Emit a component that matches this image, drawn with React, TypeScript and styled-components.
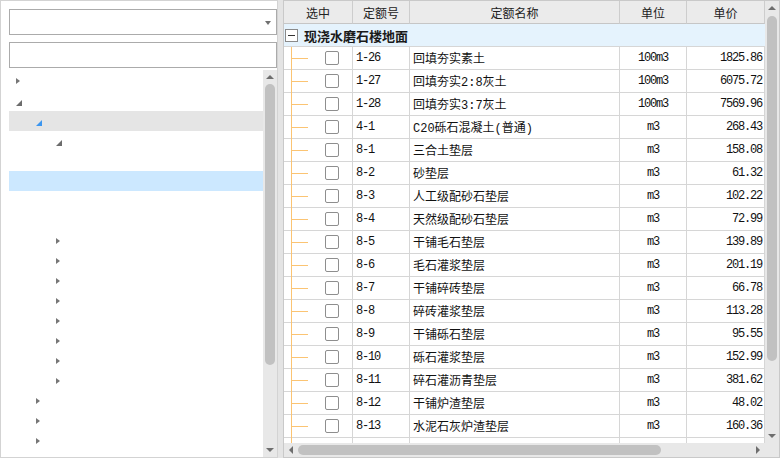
import React from "react";
import styled, { createGlobalStyle } from "styled-components";

const GlobalStyle = createGlobalStyle`
  html, body {
    margin: 0;
    padding: 0;
    background: #fff;
  }
  body {
    font-family: "Noto Sans CJK SC", sans-serif;
    font-size: 12px;
    color: #222;
  }
`;

const COLS = "69px 57px 210px 67px 78px";

type Quota = { code: string; name: string; unit: string; price: string };

const quotas: Quota[] = [
  { code: "1-26", name: "回填夯实素土", unit: "100m3", price: "1825.86" },
  { code: "1-27", name: "回填夯实2:8灰土", unit: "100m3", price: "6075.72" },
  { code: "1-28", name: "回填夯实3:7灰土", unit: "100m3", price: "7569.96" },
  { code: "4-1", name: "C20砾石混凝土(普通)", unit: "m3", price: "268.43" },
  { code: "8-1", name: "三合土垫层", unit: "m3", price: "158.08" },
  { code: "8-2", name: "砂垫层", unit: "m3", price: "61.32" },
  { code: "8-3", name: "人工级配砂石垫层", unit: "m3", price: "102.22" },
  { code: "8-4", name: "天然级配砂石垫层", unit: "m3", price: "72.99" },
  { code: "8-5", name: "干铺毛石垫层", unit: "m3", price: "139.89" },
  { code: "8-6", name: "毛石灌浆垫层", unit: "m3", price: "201.19" },
  { code: "8-7", name: "干铺碎砖垫层", unit: "m3", price: "66.78" },
  { code: "8-8", name: "碎砖灌浆垫层", unit: "m3", price: "113.28" },
  { code: "8-9", name: "干铺砾石垫层", unit: "m3", price: "95.55" },
  { code: "8-10", name: "砾石灌浆垫层", unit: "m3", price: "152.99" },
  { code: "8-11", name: "碎石灌沥青垫层", unit: "m3", price: "381.62" },
  { code: "8-12", name: "干铺炉渣垫层", unit: "m3", price: "48.02" },
  { code: "8-13", name: "水泥石灰炉渣垫层", unit: "m3", price: "160.36" },
];

type Node = { level: number; kind: "open" | "closed" | "leaf"; state?: "hover" | "selected" };

const nodes: Node[] = [
  { level: 0, kind: "closed" },
  { level: 0, kind: "open" },
  { level: 1, kind: "open", state: "hover" },
  { level: 2, kind: "open" },
  { level: 3, kind: "leaf" },
  { level: 3, kind: "leaf", state: "selected" },
  { level: 3, kind: "leaf" },
  { level: 3, kind: "leaf" },
  ...Array.from({ length: 8 }, () => ({ level: 2, kind: "closed" as const })),
  ...Array.from({ length: 3 }, () => ({ level: 1, kind: "closed" as const })),
];

const Page = styled.div`
  display: flex;
  gap: 5px;
  width: 780px;
  height: 458px;
  background: #e4e4e4;
`;

/* ---------- left side ---------- */

const LeftPanel = styled.div`
  box-sizing: border-box;
  width: 278px;
  height: 100%;
  background: #fff;
  border: 1px solid #d3d3d3;
  padding: 8px 0 0 8px;
  display: flex;
  flex-direction: column;
`;

const Combo = styled.div`
  box-sizing: border-box;
  height: 26px;
  border: 1px solid #ababab;
  display: flex;
  align-items: center;
  justify-content: flex-end;
  padding-right: 5px;
  margin-bottom: 7px;
`;

const ComboArrow = styled.span`
  width: 0;
  height: 0;
  border-top: 4px solid #707070;
  border-left: 3px solid transparent;
  border-right: 3px solid transparent;
  margin-top: 1px;
`;

const SearchBox = styled.div`
  box-sizing: border-box;
  height: 26px;
  border: 1px solid #ababab;
  margin-bottom: 2px;
`;

const Tree = styled.div`
  flex: 1;
  display: flex;
  min-height: 0;
`;

const TreeList = styled.div`
  flex: 1;
  padding-top: 1px;
  overflow: hidden;
`;

const TreeRow = styled.div<{ $level: number; $state?: "hover" | "selected" }>`
  height: 20px;
  display: flex;
  align-items: center;
  padding-left: ${(p) => 7 + p.$level * 20}px;
  background: ${(p) =>
    p.$state === "hover" ? "#e5e5e5" : p.$state === "selected" ? "#cce8ff" : "transparent"};
`;

const ClosedArrow = styled.span`
  width: 0;
  height: 0;
  border-left: 4px solid #767676;
  border-top: 3.5px solid transparent;
  border-bottom: 3.5px solid transparent;
`;

const OpenArrow = styled.span<{ $active?: boolean }>`
  width: 0;
  height: 0;
  border-bottom: 6px solid ${(p) => (p.$active ? "#3c96f0" : "#6c6c6c")};
  border-left: 6px solid transparent;
  margin-top: 3px;
`;

/* ---------- scrollbars ---------- */

const VBar = styled.div`
  width: 14px;
  flex: none;
  background: #e8e8e8;
  display: flex;
  flex-direction: column;
  align-items: center;
`;

const HBar = styled.div`
  flex: 1;
  height: 14px;
  background: #e8e8e8;
  display: flex;
  align-items: center;
`;

const ArrowCell = styled.div`
  width: 14px;
  height: 14px;
  flex: none;
  display: flex;
  align-items: center;
  justify-content: center;
`;

const Track = styled.div<{ $vertical?: boolean }>`
  flex: 1;
  display: flex;
  flex-direction: ${(p) => (p.$vertical ? "column" : "row")};
  align-items: center;
`;

const Thumb = styled.div<{ $vertical?: boolean; $start: number; $size: number }>`
  background: #c1c1c1;
  border-radius: 5px;
  flex: none;
  ${(p) =>
    p.$vertical
      ? `width: 10px; height: ${p.$size}px; margin-top: ${p.$start}px;`
      : `height: 10px; width: ${p.$size}px; margin-left: ${p.$start}px;`}
`;

const Tri = styled.span<{ $dir: "up" | "down" | "left" | "right" }>`
  width: 0;
  height: 0;
  ${(p) =>
    p.$dir === "up"
      ? "border-bottom: 4px solid #6e6e6e; border-left: 4px solid transparent; border-right: 4px solid transparent;"
      : p.$dir === "down"
      ? "border-top: 4px solid #6e6e6e; border-left: 4px solid transparent; border-right: 4px solid transparent;"
      : p.$dir === "left"
      ? "border-right: 4px solid #6e6e6e; border-top: 4px solid transparent; border-bottom: 4px solid transparent;"
      : "border-left: 4px solid #6e6e6e; border-top: 4px solid transparent; border-bottom: 4px solid transparent;"}
`;

const Corner = styled.div`
  width: 14px;
  height: 14px;
  background: #e8e8e8;
`;

function VScroll({ start, size }: { start: number; size: number }) {
  return (
    <VBar>
      <ArrowCell>
        <Tri $dir="up" />
      </ArrowCell>
      <Track $vertical>
        <Thumb $vertical $start={start} $size={size} />
      </Track>
      <ArrowCell>
        <Tri $dir="down" />
      </ArrowCell>
    </VBar>
  );
}

/* ---------- right side ---------- */

const RightPanel = styled.div`
  box-sizing: border-box;
  flex: 1;
  height: 100%;
  background: #fff;
  border: 1px solid #c9c9c9;
  display: flex;
  flex-direction: column;
`;

const Body = styled.div`
  flex: 1;
  display: flex;
  min-height: 0;
`;

const Table = styled.div`
  flex: 1;
  overflow: hidden;
`;

const HeaderRow = styled.div`
  display: grid;
  grid-template-columns: ${COLS};
  height: 23px;
`;

const HeaderCell = styled.div`
  box-sizing: border-box;
  background: #ebebeb;
  border-right: 1px solid #cdcdcd;
  border-bottom: 1px solid #c6c6c6;
  display: flex;
  align-items: center;
  justify-content: center;
  color: #222;
`;

const GroupRow = styled.div`
  box-sizing: border-box;
  height: 23px;
  background: #e5f3fd;
  border-bottom: 1px solid #d6d6d6;
  display: flex;
  align-items: center;
  padding-left: 1px;
  gap: 6px;
  font-size: 13px;
  font-weight: bold;
  color: #1a1a1a;
`;

const MinusBox = styled.span`
  box-sizing: border-box;
  width: 13px;
  height: 13px;
  border: 1px solid #8a8a8a;
  background: #fff;
  display: flex;
  align-items: center;
  justify-content: center;
  &::before {
    content: "";
    width: 7px;
    height: 1px;
    background: #333;
  }
`;

const DataRow = styled.div`
  display: grid;
  grid-template-columns: ${COLS};
  height: 23px;
`;

const Cell = styled.div<{ $align?: "left" | "center" | "right"; $mono?: boolean }>`
  box-sizing: border-box;
  border-right: 1px solid #d6d6d6;
  border-bottom: 1px solid #d6d6d6;
  display: flex;
  align-items: center;
  white-space: nowrap;
  overflow: hidden;
  justify-content: ${(p) =>
    p.$align === "center" ? "center" : p.$align === "right" ? "flex-end" : "flex-start"};
  padding: ${(p) => (p.$align === "right" ? "0 2px 0 0" : p.$align === "center" ? "0" : "0 0 0 3px")};
  font-family: ${(p) =>
    p.$mono ? `"Liberation Mono", monospace` : `"Liberation Mono", "Noto Sans CJK SC", sans-serif`};
  letter-spacing: ${(p) => (p.$mono ? "-1.2px" : "0")};
  color: #111;
`;

const CheckCell = styled.div<{ $bare?: boolean }>`
  box-sizing: border-box;
  position: relative;
  border-right: 1px solid #d6d6d6;
  border-bottom: 1px solid #d6d6d6;
  display: flex;
  align-items: center;
  padding-left: 41px;
  &::before {
    content: "";
    position: absolute;
    left: 7px;
    top: 0;
    bottom: -1px;
    width: 1px;
    background: #fbc473;
  }
  &::after {
    content: "";
    display: ${(p) => (p.$bare ? "none" : "block")};
    position: absolute;
    left: 7px;
    top: 11px;
    width: 17px;
    height: 1px;
    background: #fbc473;
  }
`;

const CheckBox = styled.span`
  box-sizing: border-box;
  width: 14px;
  height: 14px;
  border: 1px solid #8e8e8e;
  border-radius: 2px;
  background: #fff;
`;

const Footer = styled.div`
  display: flex;
  height: 14px;
`;

export default function App() {
  return (
    <>
      <GlobalStyle />
      <Page>
        <LeftPanel>
          <Combo>
            <ComboArrow />
          </Combo>
          <SearchBox />
          <Tree>
            <TreeList>
              {nodes.map((n, i) => (
                <TreeRow key={i} $level={n.level} $state={n.state}>
                  {n.kind === "closed" && <ClosedArrow />}
                  {n.kind === "open" && <OpenArrow $active={n.state === "hover"} />}
                </TreeRow>
              ))}
            </TreeList>
            <VScroll start={0} size={281} />
          </Tree>
        </LeftPanel>

        <RightPanel>
          <Body>
            <Table>
              <HeaderRow>
                <HeaderCell>选中</HeaderCell>
                <HeaderCell>定额号</HeaderCell>
                <HeaderCell>定额名称</HeaderCell>
                <HeaderCell>单位</HeaderCell>
                <HeaderCell>单价</HeaderCell>
              </HeaderRow>
              <GroupRow>
                <MinusBox />
                现浇水磨石楼地面
              </GroupRow>
              {quotas.map((q) => (
                <DataRow key={q.code}>
                  <CheckCell>
                    <CheckBox />
                  </CheckCell>
                  <Cell $mono>{q.code}</Cell>
                  <Cell>{q.name}</Cell>
                  <Cell $mono $align="center">
                    {q.unit}
                  </Cell>
                  <Cell $mono $align="right">
                    {q.price}
                  </Cell>
                </DataRow>
              ))}
              <DataRow>
                <CheckCell $bare />
                <Cell />
                <Cell />
                <Cell />
                <Cell />
              </DataRow>
            </Table>
            <VScroll start={1} size={345} />
          </Body>
          <Footer>
            <HBar>
              <ArrowCell>
                <Tri $dir="left" />
              </ArrowCell>
              <Track>
                <Thumb $start={0} $size={363} />
              </Track>
              <ArrowCell>
                <Tri $dir="right" />
              </ArrowCell>
            </HBar>
            <Corner />
          </Footer>
        </RightPanel>
      </Page>
    </>
  );
}
